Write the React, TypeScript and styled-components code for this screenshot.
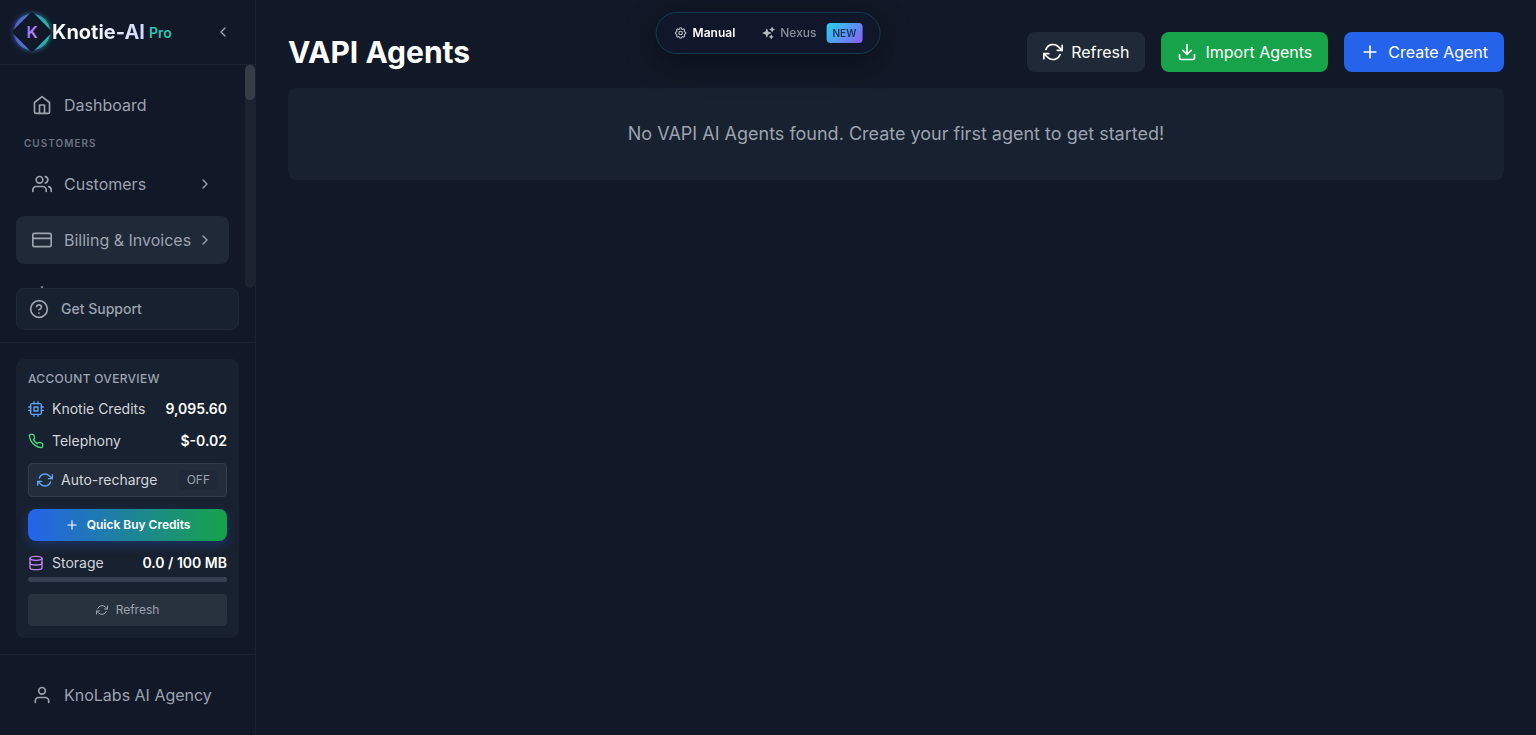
import React from 'react';
import styled, { createGlobalStyle, css } from 'styled-components';
import {
  FiChevronLeft, FiChevronRight, FiCpu, FiCreditCard, FiDatabase, FiDollarSign, FiDownload,
  FiHelpCircle, FiHome, FiPhone, FiPlus, FiRefreshCw, FiUser, FiUsers,
} from 'react-icons/fi';
import { HiSparkles } from 'react-icons/hi2';
import { TbSettings } from 'react-icons/tb';

const Global = createGlobalStyle`
  *, *::before, *::after { box-sizing: border-box; }
  body {
    margin: 0;
    background: #111827;
    color: #fff;
    font-family: Inter, "Liberation Sans", sans-serif;
    font-size: 16px;
    line-height: 24px;
  }
  button { font: inherit; color: inherit; border: 0; padding: 0; background: none; cursor: pointer; }
  a { color: inherit; text-decoration: none; }
  h1, h2, h3, p, ul, dl, dd { margin: 0; padding: 0; }
  ul { list-style: none; }
  svg { flex-shrink: 0; display: block; }
`;

const Shell = styled.div`
  display: flex;
  height: 100vh;
`;

const Sidebar = styled.aside`
  display: flex;
  flex-direction: column;
  flex: 0 0 256px;
  min-width: 0;
  height: 100%;
  border-right: 1px solid #1a2332;
`;

const Brand = styled.header`
  display: flex;
  align-items: center;
  flex: 0 0 65px;
  padding: 0 16px 0 12px;
  border-bottom: 1px solid #1b2534;
`;

const Logo = styled.svg`
  width: 64px;
  height: 64px;
  margin: 0 -12px;
`;

const BrandName = styled.span`
  font-size: 20px;
  line-height: 28px;
  font-weight: 700;
  background: linear-gradient(90deg, #ffffff 30%, #c7d2fe 110%);
  background-clip: text;
  color: transparent;
`;

const BrandTier = styled.span`
  margin: 2px auto 0 4px;
  font-size: 14px;
  line-height: 20px;
  font-weight: 600;
  color: #2cc5b0;
`;

const Collapse = styled.button`
  display: grid;
  place-items: center;
  width: 32px;
  height: 32px;
  color: #9ca3af;
`;

const NavArea = styled.div`
  display: flex;
  flex: 1 1 0;
  min-height: 0;
`;

const NavScroll = styled.nav`
  flex: 1;
  min-width: 0;
  padding: 16px 16px 0;
  overflow-x: hidden;
  overflow-y: auto;
  scrollbar-width: none;
`;

const ScrollTrack = styled.div`
  flex: 0 0 10px;
  border-radius: 5px;
  background: #1c2431;
`;

const ScrollThumb = styled.div`
  height: 35px;
  border-radius: 5px;
  background: #363d49;
`;

const NavGroup = styled.ul`
  display: flex;
  flex-direction: column;
  gap: 8px;
`;

const SectionTitle = styled.h2`
  padding: 6px 8px 8px;
  font-size: 10px;
  line-height: 17px;
  font-weight: 600;
  letter-spacing: 1px;
  text-transform: uppercase;
  color: #6b7280;
`;

const itemLayout = css`
  display: flex;
  align-items: center;
  width: 100%;
  height: 48px;
  padding: 0 16px;
  border-radius: 8px;
  color: #9ca3af;
  text-align: left;
  white-space: nowrap;
  & > svg:first-child { margin-right: 12px; }
`;

const NavLink = styled.a`${itemLayout}`;

const NavButton = styled.button<{ $active?: boolean }>`
  ${itemLayout}
  background: ${(p) => (p.$active ? '#1f2937' : 'transparent')};
  & > svg:last-child { margin-left: auto; }
`;

const SupportArea = styled.div`
  padding: 0 16px 12px;
  border-bottom: 1px solid #1b2534;
`;

const SupportLink = styled.a`
  display: flex;
  align-items: center;
  gap: 12px;
  height: 42px;
  padding: 0 12px;
  border: 1px solid #1f2b3a;
  border-radius: 8px;
  background: #18212f;
  color: #9ca3af;
  font-size: 14px;
  line-height: 20px;
  font-weight: 500;
`;

const Overview = styled.section`
  margin: 16px;
  padding: 12px;
  border-radius: 8px;
  background: #18212f;
  font-size: 14px;
  line-height: 20px;
`;

const OverviewTitle = styled.h3`
  margin-bottom: 12px;
  font-size: 12px;
  line-height: 16px;
  font-weight: 500;
  letter-spacing: 0.025em;
  text-transform: uppercase;
  color: #9ca3af;
`;

const Stats = styled.dl`
  display: flex;
  flex-direction: column;
  gap: 12px;
`;

const Stat = styled.div`
  display: flex;
  align-items: center;
  justify-content: space-between;
`;

const StatLabel = styled.dt<{ $tone: string }>`
  display: flex;
  align-items: center;
  gap: 8px;
  color: #d1d5db;
  svg { color: ${(p) => p.$tone}; }
`;

const StatValue = styled.dd`
  font-weight: 600;
  color: #fff;
`;

const Recharge = styled.button`
  display: flex;
  align-items: center;
  gap: 8px;
  width: 100%;
  height: 34px;
  margin: 12px 0;
  padding: 0 8px;
  border: 1px solid #323c4a;
  border-radius: 4px;
  background: #232c3a;
  color: #d1d5db;
  svg { color: #60a5fa; }
`;

const State = styled.span`
  margin-left: auto;
  padding: 2px 8px;
  border-radius: 4px;
  background: #1f2937;
  font-size: 12px;
  line-height: 16px;
  color: #9ca3af;
`;

const QuickBuy = styled.button`
  display: flex;
  align-items: center;
  justify-content: center;
  gap: 8px;
  width: 100%;
  height: 32px;
  margin-bottom: 12px;
  border-radius: 8px;
  background: linear-gradient(90deg, #2563eb, #16a34a);
  box-shadow: 0 4px 12px rgba(37, 99, 235, 0.3);
  font-size: 12px;
  line-height: 16px;
  font-weight: 600;
`;

const Meter = styled.div`
  height: 5px;
  margin: 4px 0 12px;
  border-radius: 3px;
  background: #374151;
`;

const SmallRefresh = styled.button`
  display: flex;
  align-items: center;
  justify-content: center;
  gap: 8px;
  width: 100%;
  height: 32px;
  border-radius: 4px;
  background: #28313e;
  font-size: 12px;
  line-height: 16px;
  color: #9ca3af;
`;

const Account = styled.footer`
  padding: 16px;
  border-top: 1px solid #1b2534;
`;

const Main = styled.main`
  flex: 1;
  min-width: 0;
  padding: 32px;
`;

const PageHeader = styled.header`
  display: flex;
  align-items: center;
  justify-content: space-between;
  margin-bottom: 16px;
`;

const Title = styled.h1`
  font-size: 30px;
  line-height: 36px;
  font-weight: 700;
`;

const Actions = styled.div`
  display: flex;
  gap: 16px;
`;

const Action = styled.button<{ $bg: string }>`
  display: flex;
  align-items: center;
  gap: 8px;
  height: 40px;
  padding: 0 16px;
  border-radius: 8px;
  background: ${(p) => p.$bg};
`;

const Empty = styled.p`
  padding: 32px;
  border-radius: 8px;
  background: #18212f;
  font-size: 18px;
  line-height: 28px;
  text-align: center;
  color: #9ca3af;
`;

const ModeSwitch = styled.div`
  position: fixed;
  top: 12px;
  left: 50%;
  transform: translateX(-50%);
  display: flex;
  align-items: center;
  height: 42px;
  padding: 0 4px;
  border: 1px solid #173a4e;
  border-radius: 21px;
  background: #10172a;
  box-shadow: 0 8px 32px rgba(0, 0, 0, 0.4);
`;

const Mode = styled.button<{ $active?: boolean }>`
  display: flex;
  align-items: center;
  gap: 5px;
  height: 32px;
  padding: 0 13px;
  font-size: 12px;
  line-height: 20px;
  font-weight: ${(p) => (p.$active ? 600 : 500)};
  color: ${(p) => (p.$active ? '#fff' : '#868d9b')};
  svg { color: #b3b8c2; }
`;

const NewBadge = styled.span`
  margin-left: 5px;
  padding: 0 6px;
  border-radius: 4px;
  background: linear-gradient(135deg, #22d3ee, #8b5cf6);
  font-size: 10px;
  line-height: 20px;
  font-weight: 600;
  color: #17355a;
`;

function BrandMark() {
  return (
    <Logo viewBox="0 0 64 64" role="img" aria-label="Knotie-AI logo">
      <defs>
        <linearGradient id="ring" x1="0" x2="1">
          <stop offset="0" stopColor="#6366f1" />
          <stop offset="1" stopColor="#2dd4bf" />
        </linearGradient>
        <linearGradient id="letter" x1="0" x2="1">
          <stop offset="0" stopColor="#8b7cf6" />
          <stop offset="1" stopColor="#c084fc" />
        </linearGradient>
        <filter id="glow" x="-50%" y="-50%" width="200%" height="200%">
          <feGaussianBlur stdDeviation="2.5" />
        </filter>
      </defs>
      <circle cx="32" cy="32" r="19" fill="url(#ring)" opacity="0.5" filter="url(#glow)" />
      <circle cx="32" cy="32" r="18" fill="url(#ring)" opacity="0.75" />
      <rect x="17.5" y="17.5" width="29" height="29" rx="4" transform="rotate(45 32 32)" fill="#111827" />
      <text x="32" y="38" textAnchor="middle" fontSize="16" fontWeight="600" fill="url(#letter)">K</text>
    </Logo>
  );
}

export default function App() {
  return (
    <>
      <Global />
      <Shell>
        <Sidebar>
          <Brand>
            <BrandMark />
            <BrandName>Knotie-AI</BrandName>
            <BrandTier>Pro</BrandTier>
            <Collapse aria-label="Collapse sidebar"><FiChevronLeft size={16} /></Collapse>
          </Brand>
          <NavArea>
            <NavScroll aria-label="Main">
              <NavGroup>
                <li><NavLink href="#dashboard"><FiHome size={20} />Dashboard</NavLink></li>
              </NavGroup>
              <SectionTitle>Customers</SectionTitle>
              <NavGroup>
                <li><NavButton><FiUsers size={20} />Customers<FiChevronRight size={16} /></NavButton></li>
                <li><NavButton $active><FiCreditCard size={20} />Billing &amp; Invoices<FiChevronRight size={16} /></NavButton></li>
                <li><NavLink href="#pricing" aria-label="Pricing"><FiDollarSign size={20} /></NavLink></li>
              </NavGroup>
            </NavScroll>
            <ScrollTrack aria-hidden="true"><ScrollThumb /></ScrollTrack>
          </NavArea>
          <SupportArea>
            <SupportLink href="#support"><FiHelpCircle size={20} />Get Support</SupportLink>
          </SupportArea>
          <Overview>
            <OverviewTitle>Account Overview</OverviewTitle>
            <Stats>
              <Stat><StatLabel $tone="#60a5fa"><FiCpu size={16} />Knotie Credits</StatLabel><StatValue>9,095.60</StatValue></Stat>
              <Stat><StatLabel $tone="#4ade80"><FiPhone size={16} />Telephony</StatLabel><StatValue>$-0.02</StatValue></Stat>
            </Stats>
            <Recharge><FiRefreshCw size={16} />Auto-recharge<State>OFF</State></Recharge>
            <QuickBuy><FiPlus size={14} />Quick Buy Credits</QuickBuy>
            <Stats>
              <Stat><StatLabel $tone="#c084fc"><FiDatabase size={16} />Storage</StatLabel><StatValue>0.0 / 100 MB</StatValue></Stat>
            </Stats>
            <Meter role="progressbar" aria-label="Storage used" aria-valuenow={0} aria-valuemin={0} aria-valuemax={100} />
            <SmallRefresh><FiRefreshCw size={12} />Refresh</SmallRefresh>
          </Overview>
          <Account>
            <NavLink href="#account"><FiUser size={20} />KnoLabs AI Agency</NavLink>
          </Account>
        </Sidebar>
        <Main>
          <PageHeader>
            <Title>VAPI Agents</Title>
            <Actions>
              <Action $bg="#1f2937"><FiRefreshCw size={20} />Refresh</Action>
              <Action $bg="#16a34a"><FiDownload size={20} />Import Agents</Action>
              <Action $bg="#2563eb"><FiPlus size={20} />Create Agent</Action>
            </Actions>
          </PageHeader>
          <Empty>No VAPI AI Agents found. Create your first agent to get started!</Empty>
        </Main>
      </Shell>
      <ModeSwitch role="group" aria-label="Agent mode">
        <Mode $active aria-pressed="true"><TbSettings size={14} />Manual</Mode>
        <Mode aria-pressed="false"><HiSparkles size={14} />Nexus<NewBadge>NEW</NewBadge></Mode>
      </ModeSwitch>
    </>
  );
}
